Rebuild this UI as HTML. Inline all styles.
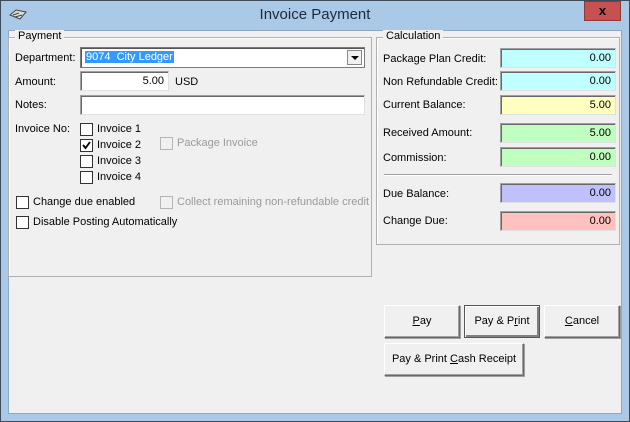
<!DOCTYPE html><html><head><style>
*{box-sizing:border-box;margin:0;padding:0}
body{width:630px;height:422px;background:#a9c9e6;font-family:"Liberation Sans",sans-serif;font-size:11px;color:#000;position:relative;overflow:hidden}
.a{position:absolute;white-space:nowrap}
#win{position:absolute;left:0;top:0;width:630px;height:422px;border:1px solid #3c4a5a}
#client{position:absolute;left:8px;top:30px;width:614px;height:384px;background:#f0f0f0;border:1px solid #8ea8c4}
.grp{position:absolute;border:1px solid #b0b0b0;box-shadow:inset 1px 1px 0 #fff}
.lg{position:absolute;top:-8px;left:6px;background:#f0f0f0;padding:0 3px}
.in{position:absolute;height:20px;background:#fff;border:1px solid;border-color:#a0a0a0 #e0e0e0 #e0e0e0 #a0a0a0;box-shadow:inset 1px 1px 0 #696969;text-align:right;padding:3px 4px 0 0}
.cb{position:absolute;width:13px;height:13px;border:1px solid #333;background:#fff}
.cb.d{border-color:#b5b5b5;background:#f0f0f0}
.btn{position:absolute;height:33px;background:#f0f0f0;border:1px solid;border-color:#fff #696969 #696969 #fff;box-shadow:1px 1px 0 #a0a0a0, inset -1px -1px 0 #a0a0a0;text-align:center;line-height:31px}
.g{color:#9a9a9a}
</style></head><body>
<div id="win"></div>
<svg class="a" style="left:8px;top:9px" width="20" height="12"><path d="M2 6 L8 1 L18 3 L12 10 Z" fill="#ddd" stroke="#444"/><path d="M5 6 L11 4 M7 8 L14 6" stroke="#444"/></svg>
<div class="a" style="left:0;width:630px;top:6px;text-align:center;font-size:15px;color:#1e2a3a">Invoice Payment</div>
<div class="a" style="left:584px;top:1px;width:37px;height:20px;background:#c75050;border:1px solid #8a3a3a;font-weight:bold;text-align:center;font-size:13px;line-height:17px;color:#000">x</div>
<div id="client"></div>
<div class="grp" style="left:8px;top:37px;width:364px;height:240px"><span class="lg">Payment</span></div>
<div class="a" style="left:15px;top:52px">Department:</div>
<div class="a" style="left:80px;top:47px;width:285px;height:21px;background:#fff;border:1px solid #7a7a7a;box-shadow:inset 1px 1px 0 #555"><span style="position:absolute;left:4px;top:3px;background:#3399ff;color:#fff;padding:0 1px">9074&nbsp; City Ledger</span><div style="position:absolute;right:2px;top:2px;width:15px;height:15px;background:#f0f0f0;border:1px solid #888"><div style="position:absolute;left:3px;top:5px;border-left:4px solid transparent;border-right:4px solid transparent;border-top:4px solid #000"></div></div></div>
<div class="a" style="left:15px;top:76px">Amount:</div>
<div class="in" style="left:80px;top:71px;width:89px">5.00</div>
<div class="a" style="left:175px;top:76px">USD</div>
<div class="a" style="left:15px;top:99px">Notes:</div>
<div class="in" style="left:80px;top:95px;width:285px"></div>
<div class="a" style="left:15px;top:123px">Invoice No:</div>
<div class="cb" style="left:80px;top:123px"></div><div class="a" style="left:97px;top:123px">Invoice 1</div>
<div class="cb" style="left:80px;top:139px"><svg width="11" height="11" style="position:absolute;left:0;top:0"><path d="M2 5 L4.5 8 L9 2" stroke="#000" stroke-width="1.8" fill="none"/></svg></div><div class="a" style="left:97px;top:139px">Invoice 2</div>
<div class="cb" style="left:80px;top:155px"></div><div class="a" style="left:97px;top:155px">Invoice 3</div>
<div class="cb" style="left:80px;top:171px"></div><div class="a" style="left:97px;top:171px">Invoice 4</div>
<div class="cb d" style="left:160px;top:137px"></div><div class="a g" style="left:177px;top:137px">Package Invoice</div>
<div class="cb" style="left:16px;top:196px"></div><div class="a" style="left:33px;top:196px">Change due enabled</div>
<div class="cb d" style="left:160px;top:196px"></div><div class="a g" style="left:177px;top:196px">Collect remaining non-refundable credit</div>
<div class="cb" style="left:16px;top:216px"></div><div class="a" style="left:33px;top:216px">Disable Posting Automatically</div>

<div class="grp" style="left:376px;top:37px;width:244px;height:208px"><span class="lg">Calculation</span></div>
<div class="a" style="left:383px;top:53px">Package Plan Credit:</div>
<div class="in" style="left:500px;top:48px;width:116px;background:#c0ffff">0.00</div>
<div class="a" style="left:383px;top:76px">Non Refundable Credit:</div>
<div class="in" style="left:500px;top:71px;width:116px;background:#c0ffff">0.00</div>
<div class="a" style="left:383px;top:99px">Current Balance:</div>
<div class="in" style="left:500px;top:95px;width:116px;background:#ffffc0">5.00</div>
<div class="a" style="left:383px;top:127px">Received Amount:</div>
<div class="in" style="left:500px;top:123px;width:116px;background:#c0ffc0">5.00</div>
<div class="a" style="left:383px;top:152px">Commission:</div>
<div class="in" style="left:500px;top:147px;width:116px;background:#c0ffc0">0.00</div>
<div class="a" style="left:384px;top:174px;width:228px;height:2px;border-top:1px solid #a0a0a0;border-bottom:1px solid #fff"></div>
<div class="a" style="left:383px;top:188px">Due Balance:</div>
<div class="in" style="left:500px;top:183px;width:116px;background:#c0c0ff">0.00</div>
<div class="a" style="left:383px;top:215px">Change Due:</div>
<div class="in" style="left:500px;top:211px;width:116px;background:#ffc0c0">0.00</div>

<div class="btn" style="left:384px;top:305px;width:76px"><u>P</u>ay</div>
<div class="btn" style="left:464px;top:305px;width:76px;border:1px solid #555;box-shadow:inset 1px 1px 0 #fff,inset -2px -2px 0 #808080">Pay &amp; P<u>r</u>int</div>
<div class="btn" style="left:544px;top:305px;width:76px"><u>C</u>ancel</div>
<div class="btn" style="left:384px;top:343px;width:140px">Pay &amp; Print <u>C</u>ash Receipt</div>
</body></html>
